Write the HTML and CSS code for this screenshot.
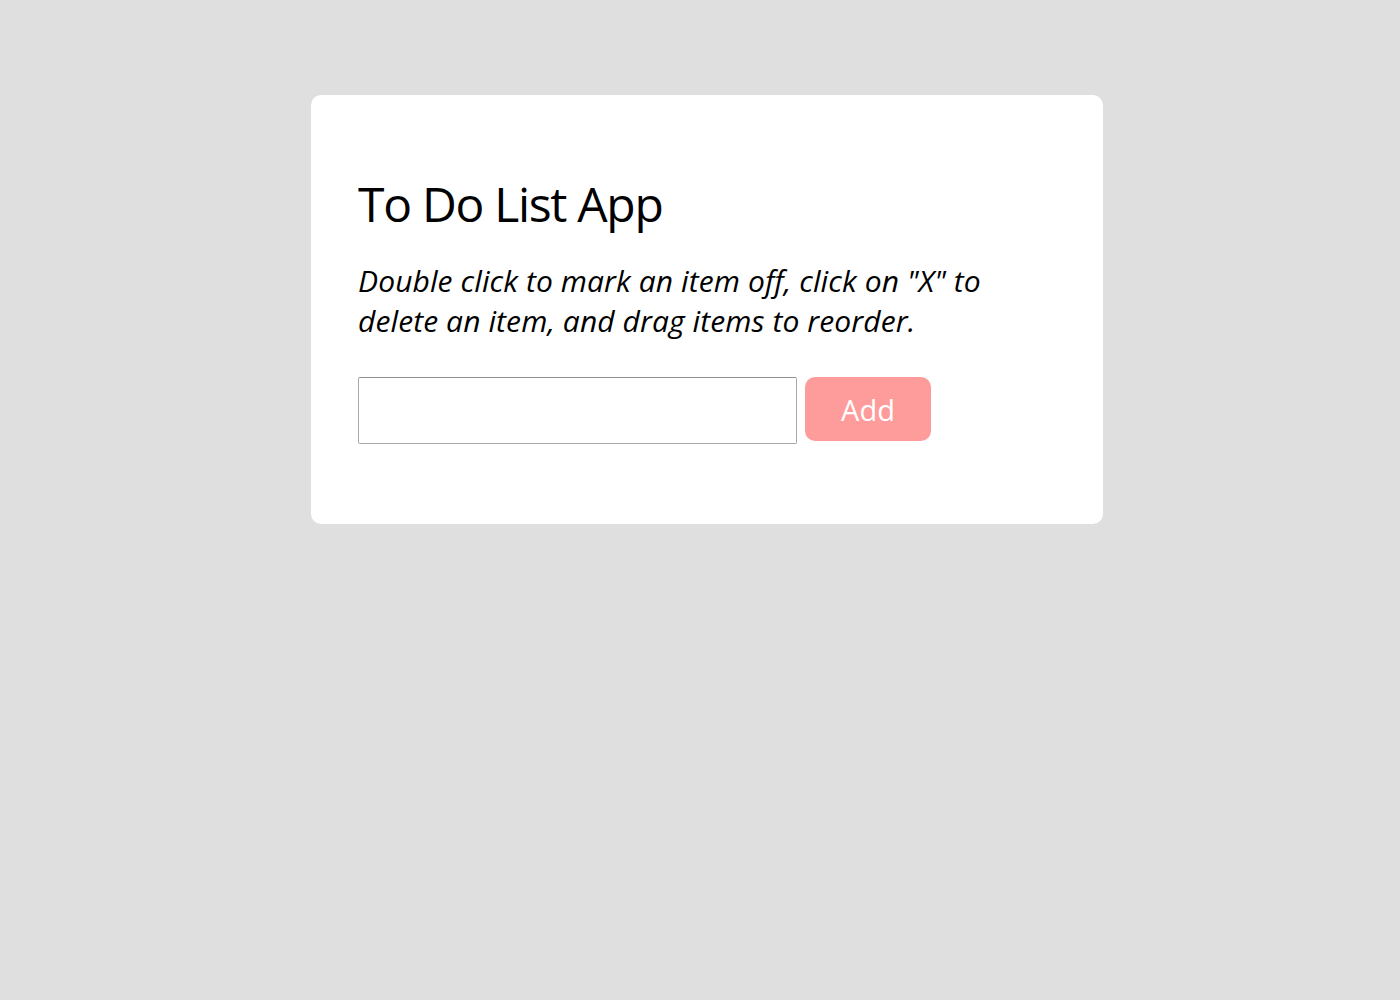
FILE: index.html
```html
<!DOCTYPE html>
<html lang="en">
<head>
<meta charset="utf-8">
<title>To Do List App</title>
<link rel="stylesheet" href="styles.css">
</head>
<body>
<main class="card">
  <h1 class="title">To Do List App</h1>
  <p class="hint">Double click to mark an item off, click on "X" to delete an item, and drag items to reorder.</p>
  <form class="add-row" onsubmit="return false;">
    <input class="add-input" type="text">
    <button class="add-btn" type="submit">Add</button>
  </form>
</main>
</body>
</html>
```
FILE: styles.css
```css
html, body {
  margin: 0;
  padding: 0;
}
body {
  background: #dfdfdf;
  font-family: "Open Sans", sans-serif;
  color: #000;
  padding-top: 95px;
}
.card {
  box-sizing: border-box;
  width: 792px;
  height: 429px;
  margin-left: 311px;
  background: #fff;
  border-radius: 10px;
  padding: 76px 47px 0 47px;
}
.title {
  margin: 0;
  font-size: 48px;
  font-weight: 400;
  letter-spacing: -1.3px;
  line-height: 65px;
}
.hint {
  margin: 25px 0 0 0;
  max-width: 660px;
  font-size: 30px;
  font-style: italic;
  letter-spacing: 0.1px;
  line-height: 40px;
}
.add-row {
  display: flex;
  align-items: flex-start;
  gap: 8px;
  margin-top: 36px;
}
.add-input {
  box-sizing: border-box;
  width: 439px;
  height: 67px;
  margin: 0;
  border-style: solid;
  border-width: 1px;
  border-color: #8f8f8f #a9a9a9 #a9a9a9 #a9a9a9;
  border-radius: 2px;
  font-family: "Open Sans", sans-serif;
  font-size: 24px;
}
.add-btn {
  width: 126px;
  height: 64px;
  margin: 0;
  border: none;
  border-radius: 10px;
  background: #fe9b9b;
  color: #fff;
  font-family: "Open Sans", sans-serif;
  font-size: 29px;
  cursor: pointer;
}
```
